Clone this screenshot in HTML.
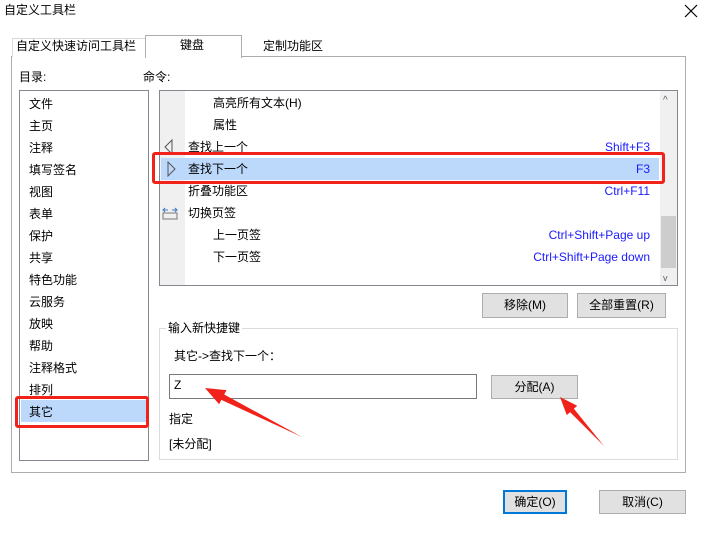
<!DOCTYPE html>
<html><head><meta charset="utf-8"><style>
*{margin:0;padding:0;box-sizing:border-box}
body{width:704px;height:536px;background:#fff;font-family:"Liberation Sans","Noto Sans CJK SC",sans-serif;font-size:12px;color:#000;position:relative;overflow:hidden}
.a{position:absolute;white-space:nowrap;line-height:16px}
.box{position:absolute}
.btn{position:absolute;background:#e1e1e1;border:1px solid #adadad;text-align:center;line-height:22px}
.k{color:#1a1aff;position:absolute;right:28px}
</style></head><body>
<div class="a" style="left:4px;top:2px">自定义工具栏</div>
<svg class="box" style="left:684px;top:4px" width="14" height="14"><path d="M1 1L13 13M13 1L1 13" stroke="#000" stroke-width="1.2"/></svg>
<div class="box" style="left:11px;top:56px;width:675px;height:417px;border:1px solid #adadad"></div>
<div class="box" style="left:12px;top:38px;width:134px;height:19px;border:1px solid #d9d9d9;border-bottom:none;background:#fff"></div>
<div class="a" style="left:16px;top:38px">自定义快速访问工具栏</div>
<div class="box" style="left:145px;top:35px;width:97px;height:23px;border:1px solid #adadad;border-bottom:none;background:#fff"></div>
<div class="a" style="left:180px;top:37px">键盘</div>
<div class="a" style="left:263px;top:38px">定制功能区</div>
<div class="a" style="left:19px;top:69px">目录:</div>
<div class="a" style="left:143px;top:69px">命令:</div>
<div class="box" style="left:19px;top:90px;width:130px;height:371px;border:1px solid #828790"></div>
<div class="box" style="left:21px;top:400px;width:125px;height:22px;background:#bcd8fb"></div>
<div class="a" style="left:29px;top:93px;line-height:22px">文件<br>主页<br>注释<br>填写签名<br>视图<br>表单<br>保护<br>共享<br>特色功能<br>云服务<br>放映<br>帮助<br>注释格式<br>排列<br>其它</div>
<div class="box" style="left:15px;top:396px;width:134px;height:32px;border:3px solid #f0221a;border-radius:3px"></div>
<div class="box" style="left:159px;top:90px;width:519px;height:196px;border:1px solid #828790"></div>
<div class="box" style="left:160px;top:91px;width:25px;height:194px;background:#f0f0f0"></div>
<div class="box" style="left:660px;top:91px;width:17px;height:194px;background:#f0f0f0"></div>
<div class="box" style="left:661px;top:216px;width:15px;height:52px;background:#cdcdcd"></div>
<div class="a" style="left:663px;top:93px;font-size:10px;color:#606060">^</div>
<div class="a" style="left:663px;top:270px;font-size:9px;color:#606060">v</div>
<div class="box" style="left:161px;top:158px;width:498px;height:22px;background:#bcd8fb"></div>
<svg class="box" style="left:163px;top:139px" width="12" height="16"><path d="M9 1L2 8L9 15Z" fill="none" stroke="#555"/></svg>
<svg class="box" style="left:166px;top:161px" width="12" height="16"><path d="M2 1L9 8L2 15Z" fill="none" stroke="#555"/></svg>
<svg class="box" style="left:162px;top:206px" width="16" height="14"><path d="M1 7H15V13H1Z" fill="none" stroke="#777"/><path d="M2 4H6M3 2L1 4L3 6M10 4H14M13 2L15 4L13 6" stroke="#3a78c8" fill="none"/></svg>
<div class="a" style="left:213px;top:95px">高亮所有文本(H)</div>
<div class="a" style="left:213px;top:117px">属性</div>
<div class="a" style="left:188px;top:139px;width:490px">查找上一个<span class="k">Shift+F3</span></div>
<div class="a" style="left:188px;top:161px;width:490px">查找下一个<span class="k">F3</span></div>
<div class="a" style="left:188px;top:183px;width:490px">折叠功能区<span class="k">Ctrl+F11</span></div>
<div class="a" style="left:188px;top:205px">切换页签</div>
<div class="a" style="left:213px;top:227px;width:465px">上一页签<span class="k">Ctrl+Shift+Page up</span></div>
<div class="a" style="left:213px;top:249px;width:465px">下一页签<span class="k">Ctrl+Shift+Page down</span></div>
<div class="box" style="left:152px;top:152px;width:513px;height:32px;border:3px solid #f0221a;border-radius:3px"></div>
<div class="btn" style="left:482px;top:293px;width:86px;height:25px">移除(M)</div>
<div class="btn" style="left:577px;top:293px;width:89px;height:25px">全部重置(R)</div>
<div class="box" style="left:159px;top:328px;width:519px;height:132px;border:1px solid #dcdcdc"></div>
<div class="a" style="left:166px;top:320px;background:#fff;padding:0 2px">输入新快捷键</div>
<div class="a" style="left:174px;top:348px">其它-&gt;查找下一个：</div>
<div class="box" style="left:169px;top:374px;width:308px;height:25px;border:1px solid #7a7a7a"></div>
<div class="a" style="left:174px;top:377px">Z</div>
<div class="btn" style="left:491px;top:375px;width:87px;height:24px">分配(A)</div>
<div class="a" style="left:169px;top:411px">指定</div>
<div class="a" style="left:169px;top:436px">[未分配]</div>
<div class="btn" style="left:503px;top:490px;width:64px;height:24px;border:2px solid #0078d7;line-height:20px">确定(O)</div>
<div class="btn" style="left:599px;top:490px;width:87px;height:24px">取消(C)</div>
<svg class="box" style="left:0;top:0" width="704" height="536">
<path d="M302 437L221.4 399.9L219.1 404.3L205 388L226.5 390.1L224.2 394.5Z" fill="#f0221a"/>
<path d="M604 446L570.1 412.1L566.8 415.1L560 397L577.2 405.7L573.9 408.7Z" fill="#f0221a"/>
</svg>
</body></html>
